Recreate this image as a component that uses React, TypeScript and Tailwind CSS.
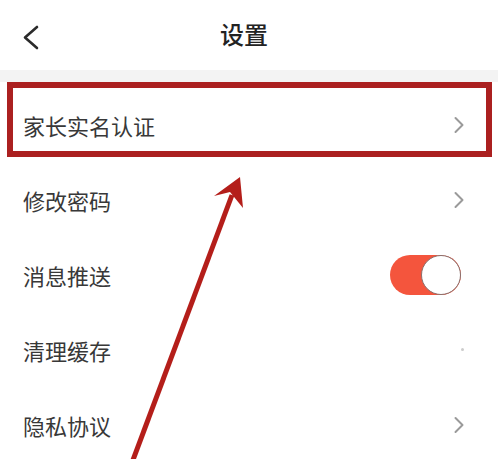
import { ReactNode } from "react";

const font = { fontFamily: '"Noto Sans CJK SC", "Noto Sans", sans-serif' };

function Chevron() {
  return (
    <svg width="12" height="18" viewBox="0 0 12 18" fill="none">
      <path d="M2.5 2 L9.5 9 L2.5 16" stroke="#9a9a9a" strokeWidth="2" strokeLinecap="round" strokeLinejoin="round" />
    </svg>
  );
}

function Toggle() {
  return (
    <div className="w-[71px] h-[40px] rounded-full bg-[#f4553d] flex items-center justify-end mr-[4px]">
      <div className="w-[40px] h-[40px] rounded-full bg-white border-[1.5px] border-[#8a6f6c]" />
    </div>
  );
}

function Row({ label, right }: { label: string; right?: ReactNode }) {
  return (
    <div className="h-[75px] flex items-center justify-between pl-[23px] pr-[33px]">
      <span className="text-[22px] text-[#383838] leading-none">{label}</span>
      {right}
    </div>
  );
}

export default function App() {
  return (
    <div className="relative w-[498px] h-[459px] overflow-hidden bg-white" style={font}>
      {/* header */}
      <div className="h-[70px] flex items-center justify-center relative pr-[10px] pb-[2px]">
        <svg className="absolute left-[20px] top-[22px]" width="24" height="30" viewBox="0 0 24 30" fill="none">
          <path d="M17 5 L5 15.5 L17 26" stroke="#2b2b2b" strokeWidth="2.6" strokeLinecap="round" strokeLinejoin="round" />
        </svg>
        <span className="text-[24px] font-medium text-[#222222] leading-none">设置</span>
      </div>
      <div className="h-[12px] bg-[#f3f3f3]" />

      {/* list */}
      <div className="pt-[5px]">
        <Row label="家长实名认证" right={<Chevron />} />
        <Row label="修改密码" right={<Chevron />} />
        <Row label="消息推送" right={<Toggle />} />
        <Row label="清理缓存" right={<div className="w-[3px] h-[3px] rounded-full bg-[#cccccc] mr-[1px]" />} />
        <Row label="隐私协议" right={<Chevron />} />
      </div>

      {/* annotation box */}
      <div className="absolute left-[7px] top-[82px] w-[485px] h-[75px] border-[6px] border-[#ab2020]" />

      {/* annotation arrow */}
      <svg className="absolute left-0 top-0" width="498" height="459" viewBox="0 0 498 459" fill="none">
        <line x1="130" y1="468" x2="232" y2="195" stroke="#b41e1a" strokeWidth="5" />
        <path d="M240 177 L214 196 L230 192 L243 208 L240 177 Z" fill="#b41e1a" />
      </svg>
    </div>
  );
}
